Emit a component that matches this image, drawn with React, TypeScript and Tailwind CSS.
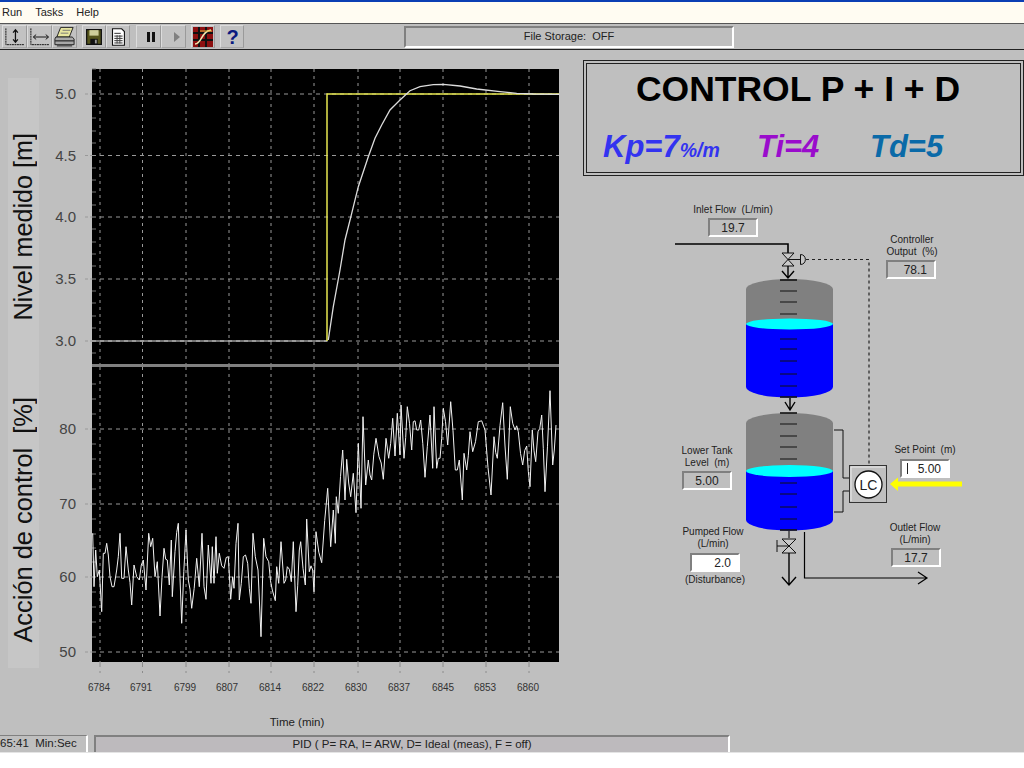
import React from 'react';

// control signal traced from the trend, as x,y in page pixels
const RAW_A = [38,490,42,650,47,540,52,620,58,600,65,725,70,550,80,520,90,620,102,650,110,600,120,490,125,625,132,625,138,530,145,600,155,705,162,585,170,620,178,630,190,570,198,660,206,490,212,530,218,505,225,620,232,575,240,738,252,535,262,570,268,645,274,510,277,680,285,545,295,460,305,760,318,480,325,630,335,715,350,565,358,650,366,490,372,650,378,688,385,525,393,640,397,530,402,640,408,500,412,610,418,550,432,595,445,560,452,688,458,620,462,655,468,520,474,460,478,690,490,560,503,580,513,700,519,490,526,560,534,600,543,800,551,505,558,560,566,575,577,660,586,692,590,590,596,640,603,515,612,640,622,590,634,635,640,515,648,725,658,540,662,515,676,645,680,447,688,605,698,600,702,665,708,485,725,578,743,355,752,530,760,420,766,520,769,380,775,430];
const RAW_B = [128,240,135,390,140,268,152,380,160,310,168,428,175,220,183,415,189,140,197,345,205,270,215,330,228,205,237,260,250,328,258,205,266,265,278,145,285,258,292,130,300,255,303,105,312,265,322,110,335,240,340,155,350,180,362,150,375,322,382,230,390,135,398,295,402,110,410,295,420,265,430,115,443,225,452,95,466,300,478,270,487,390,492,250,500,300,510,185,518,245,535,155,555,180,573,375,582,200,592,265,608,98,622,328,631,110,645,180,655,185,668,285,680,228,690,350,697,180,707,275,714,185,725,135,735,365,750,62,758,285,768,165];

function controlPoints() {
  const pts: number[][] = [];
  for (let i = 0; i < RAW_A.length; i += 2) pts.push([80 + RAW_A[i] / 3, 370 + RAW_A[i + 1] / 3]);
  for (let i = 0; i < RAW_B.length; i += 2) pts.push([300 + RAW_B[i] / 3, 370 + RAW_B[i + 1] / 3]);
  const out: string[] = [];
  pts.forEach((p, i) => {
    out.push(`${p[0].toFixed(1)},${p[1].toFixed(1)}`);
    const n = pts[i + 1];
    if (n && n[0] - p[0] > 3) {
      const off = i % 2 === 0 ? 5 : -5;
      out.push(`${((p[0] + n[0]) / 2).toFixed(1)},${((p[1] + n[1]) / 2 + off).toFixed(1)}`);
    }
  });
  return out.join(' ');
}

const CURVE = [[85,810],[100,710],[120,600],[135,510],[155,430],[175,350],[205,260],[225,205],[245,165],[270,120],[300,90],[330,62],[360,50],[400,44],[430,43],[480,48],[530,57],[600,65],[650,70],[700,72],[778,73]]
  .map(([x, y]) => `${(300 + x / 3).toFixed(1)},${(70 + y / 3).toFixed(1)}`)
  .join(' ');

const V_GRID = [100, 142.5, 186, 229, 271, 314, 358, 400, 443, 486, 529];
const TIMES = [[99,'6784'],[141,'6791'],[185,'6799'],[227,'6807'],[270,'6814'],[313,'6822'],[356,'6830'],[399,'6837'],[443,'6845'],[485,'6853'],[528,'6860']] as const;
const UPPER = [[94,'5.0'],[155.5,'4.5'],[217,'4.0'],[279,'3.5'],[341,'3.0']] as const;
const LOWER = [[429,'80'],[504,'70'],[577,'60'],[652,'50']] as const;

const Trends = () => (
  <svg viewBox="40 50 530 685" className="w-[530px] h-[685px] shrink-0" fontFamily="'Liberation Sans', Arial, sans-serif">
    <rect x="92" y="69" width="467" height="295" fill="#000" />
    <rect x="92" y="367" width="467" height="295" fill="#000" />
    <rect x="92" y="364" width="467" height="3" fill="#808080" />
    {/* minor ticks */}
    {[69,81,106,118,131,143,168,180,192,205,229,242,254,266,291,303,316,328,353].map(y => (
      <line key={y} x1="92" x2="96" y1={y} y2={y} stroke="#777" />
    ))}
    {[384,399,414,444,459,474,489,519,534,548,562,592,607,622,637].map(y => (
      <line key={y} x1="92" x2="96" y1={y} y2={y} stroke="#777" />
    ))}
    {/* grid */}
    {V_GRID.map(x => (
      <g key={x}>
        <line x1={x} x2={x} y1="69" y2="364" stroke="#999" strokeDasharray="3 4" />
        <line x1={x} x2={x} y1="367" y2="662" stroke="#999" strokeDasharray="3 4" />
        <line x1={x} x2={x} y1="662" y2="673" stroke="#8c8c8c" strokeDasharray="5 4" />
      </g>
    ))}
    {[...UPPER, ...LOWER].map(([y]) => (
      <g key={y}>
        <line x1="92" x2="559" y1={y} y2={y} stroke="#999" strokeDasharray="4 4" />
        <line x1="85" x2="92" y1={y} y2={y} stroke="#999" strokeDasharray="3 2" />
      </g>
    ))}
    {/* axis numbers */}
    {UPPER.map(([y, t]) => (
      <text key={t} x="76" y={y + 5} textAnchor="end" fontSize="15" fill="#444">{t}</text>
    ))}
    {LOWER.map(([y, t]) => (
      <text key={t} x="76" y={y + 5} textAnchor="end" fontSize="15" fill="#444">{t}</text>
    ))}
    {TIMES.map(([x, t]) => (
      <text key={t} x={x} y="691" textAnchor="middle" fontSize="10" fill="#333">{t}</text>
    ))}
    <text x="297" y="726" textAnchor="middle" fontSize="11.5" fill="#222">Time (min)</text>
    {/* level */}
    <polyline points="92,341 327,341" fill="none" stroke="#e8e8e8" strokeWidth="1.2" />
    <polyline points="327,341 327,94 559,94" fill="none" stroke="#e8e850" strokeWidth="1.5" />
    <polyline points={CURVE} fill="none" stroke="#dcdcdc" strokeWidth="1.3" />
    {/* control action */}
    <polyline points={controlPoints()} fill="none" stroke="#f2f2f2" strokeWidth="1" />
  </svg>
);

const Ticks = ({ ys }: { ys: number[] }) => (
  <>
    {ys.map((y, i) => (
      <line key={y} x1="780" x2="797" y1={y} y2={y} stroke="#111" strokeWidth={i === 0 || i === ys.length - 1 ? 1.6 : 1} />
    ))}
  </>
);

const Tank = ({ top, side, water, waterRy, sideEnd }: { top: number; side: number; water: number; waterRy: number; sideEnd: number }) => (
  <>
    <ellipse cx="789.5" cy={side} rx="43.5" ry={side - top} fill="#808080" />
    <rect x="746" y={side} width="87" height={water - side} fill="#808080" />
    <ellipse cx="789.5" cy={sideEnd} rx="43.5" ry="10.5" fill="#0000ff" />
    <rect x="746" y={water} width="87" height={sideEnd - water} fill="#0000ff" />
    <ellipse cx="789.5" cy={water} rx="43.5" ry={waterRy} fill="#00ffff" />
  </>
);

const Schematic = () => (
  <svg viewBox="570 176 454 558" className="w-[454px] h-[558px] block" fontFamily="'Liberation Sans', Arial, sans-serif">
    <Tank top={279} side={289} water={324} waterRy={5.5} sideEnd={387} />
    <Ticks ys={[280, 291, 302, 314, 339, 349, 361, 374, 386, 397]} />
    <Tank top={413} side={423} water={471} waterRy={6} sideEnd={520} />
    <Ticks ys={[413, 424, 436, 447, 459, 483, 494, 507, 519, 530]} />

    {/* inlet line and valve */}
    <path d="M675 244H788V253" fill="none" stroke="#000" strokeWidth="1.6" />
    <path d="M782 253H794L782 266H794Z" fill="#c8c8c8" stroke="#111" />
    <path d="M788 259.5H800" stroke="#111" />
    <path d="M800.5 254.5C807 254.5 807 264.5 800.5 264.5Z" fill="#c8c8c8" stroke="#111" />
    <path d="M806 259.5H869V465" fill="none" stroke="#222" strokeWidth="1.2" strokeDasharray="3 3" />
    <path d="M788 266V278M782 271L788 278L794 271" fill="none" stroke="#000" strokeWidth="1.4" />
    <path d="M790 398V410M785 402L790 410L795 402" fill="none" stroke="#000" strokeWidth="1.4" />

    {/* level transmitter */}
    <path d="M834 430H843V478H849M834 512H843V491H849" fill="none" stroke="#111" />
    <rect x="849.5" y="465.5" width="37" height="37" fill="#c0c0c0" stroke="#333" />
    <path d="M851 501V467H885" fill="none" stroke="#ececec" />
    <circle cx="868.5" cy="484.5" r="13.5" fill="#fff" stroke="#111" strokeWidth="1.3" />
    <text x="868.5" y="489.5" textAnchor="middle" fontSize="14" fill="#222">LC</text>
    <path d="M890 484L898 477.5V481.5H962V486.5H898V491Z" fill="#ffff00" />

    {/* drain and outlet */}
    <path d="M789 531V538" stroke="#000" />
    <path d="M782 539H796L782 553H796Z" fill="#c8c8c8" stroke="#111" />
    <path d="M777 540V552M777 546H789" fill="none" stroke="#111" />
    <path d="M789 553V584M782 577L789 585L796 577" fill="none" stroke="#000" strokeWidth="1.4" />
    <path d="M804.5 532V578H926M918 572L927 578L918 584" fill="none" stroke="#000" strokeWidth="1.2" />
  </svg>
);

const IconAxisV = () => (
  <svg viewBox="0 0 24 22" className="w-6 h-[22px]" fill="none" stroke="#111">
    <path d="M3 2V19H22" strokeDasharray="2 0.6" />
    <path d="M13 4V16M10.5 6.5L13 3.5L15.5 6.5M10.5 13.5L13 16.5L15.5 13.5" strokeWidth="1.3" />
  </svg>
);

const IconAxisH = () => (
  <svg viewBox="0 0 24 22" className="w-6 h-[22px]" fill="none" stroke="#111">
    <path d="M3 2V19H22" strokeDasharray="2 0.6" />
    <path d="M6 11H21M8.5 8.5L5.5 11L8.5 13.5M18.5 8.5L21.5 11L18.5 13.5" />
  </svg>
);

const IconPrinter = () => (
  <svg viewBox="0 0 24 22" className="w-6 h-[22px]">
    <path d="M8 1H21L17 11H4Z" fill="#e8e6a0" stroke="#222" />
    <path d="M10 4H18M8 7H16" stroke="#777" />
    <path d="M3 11H20L22 13V19H2V13Z" fill="#a8a8a8" stroke="#222" />
    <path d="M2 15H22" stroke="#333" strokeWidth="1.4" />
    <rect x="4" y="19" width="16" height="2" fill="#555" />
  </svg>
);

const IconSave = () => (
  <svg viewBox="0 0 24 22" className="w-6 h-[22px]">
    <path d="M4 3H20V19H4Z" fill="#55551c" stroke="#111" strokeWidth="1.4" />
    <rect x="7" y="3.5" width="10" height="6" fill="#cfcf9a" />
    <rect x="8" y="13" width="8" height="6" fill="#111" />
    <rect x="13" y="14" width="2" height="4" fill="#999" />
  </svg>
);

const IconDoc = () => (
  <svg viewBox="0 0 24 22" className="w-6 h-[22px]" fill="none">
    <path d="M6 2H16L19 5V20H6Z" fill="#fff" stroke="#111" strokeWidth="1.2" />
    <path d="M8 7H15M8 10H17M8 12.5H17M8 15H17M8 17.5H17" stroke="#222" />
    <path d="M11 9V18M14 9V18" stroke="#444" />
  </svg>
);

const IconTrend = () => (
  <svg viewBox="0 0 22 22" className="w-[22px] h-[22px]">
    <rect x="1" y="1" width="20" height="20" fill="#8c1010" />
    <path d="M1 7H21M1 14H21M7 1V21M14 1V21" stroke="#111" strokeWidth="2" />
    <path d="M3 18C10 18 9 5 19 4" fill="none" stroke="#f0e8b0" strokeWidth="1.5" />
    <path d="M8 5H20" stroke="#e8c040" />
  </svg>
);

const ToolBtn = ({ className, children }: { className: string; children?: React.ReactNode }) => (
  <div className={`h-[23px] flex items-center justify-center bg-[#c2c2c2] border-t border-l border-t-[#dcdcdc] border-l-[#dcdcdc] border-r border-b border-r-[#9a9a9a] border-b-[#a8a8a8] ${className}`}>
    {children}
  </div>
);

const Sunken = ({ className, children }: { className: string; children: React.ReactNode }) => (
  <div className={`absolute w-[50px] h-[19px] flex items-center text-[12px] text-[#222] border-2 border-t-[#808080] border-l-[#808080] border-r-white border-b-white ${className}`}>
    {children}
  </div>
);

const Caption = ({ className, children }: { className: string; children: React.ReactNode }) => (
  <div className={`absolute -translate-x-1/2 w-max text-center whitespace-pre text-[10px] leading-[11.5px] text-[#222] ${className}`}>
    {children}
  </div>
);

const App: React.FC = () => {
  return (
    <div className="w-[1024px] h-[768px] flex flex-col bg-white overflow-hidden font-['Liberation_Sans',Arial,sans-serif] text-[#111]">
      <div className="h-[2px] bg-[#0b3fb4]" />

      {/* Menu */}
      <div className="h-[21px] bg-[#fffcf2] flex items-center gap-[13px] pl-[2px] text-[11px] text-[#222]">
        <span>Run</span>
        <span>Tasks</span>
        <span>Help</span>
      </div>

      {/* Toolbar */}
      <div className="h-[27px] bg-[#bfbfbf] border-t border-t-[#555] border-b border-b-[#222] flex items-center pl-[2px]">
        <ToolBtn className="w-[25px]"><IconAxisV /></ToolBtn>
        <ToolBtn className="w-[25px]"><IconAxisH /></ToolBtn>
        <ToolBtn className="w-[25px]"><IconPrinter /></ToolBtn>
        <ToolBtn className="w-[24px] ml-[5px]"><IconSave /></ToolBtn>
        <ToolBtn className="w-[24px]"><IconDoc /></ToolBtn>
        <ToolBtn className="w-[25px] ml-[6px] pl-[5px]">
          <div className="flex gap-[2px]">
            <div className="w-[3px] h-[10px] bg-[#111]" />
            <div className="w-[3px] h-[10px] bg-[#111]" />
          </div>
        </ToolBtn>
        <ToolBtn className="w-[25px] pl-[6px]">
          <div className="w-0 h-0 border-y-[5px] border-y-transparent border-l-[6px] border-l-[#808080]" />
        </ToolBtn>
        <ToolBtn className="w-[24px] ml-[5px]"><IconTrend /></ToolBtn>
        <ToolBtn className="w-[24px] ml-[5px] pl-[1px]">
          <span className="text-[20px] font-bold text-[#0a1a80] leading-none">?</span>
        </ToolBtn>
        <div className="ml-[160px] w-[330px] h-[22px] flex items-center justify-center text-[11px] text-[#222] border-2 border-t-[#808080] border-l-[#808080] border-r-white border-b-white">
          <span className="whitespace-pre">File Storage:  OFF</span>
        </div>
      </div>

      {/* Main */}
      <div className="h-[685px] bg-[#bfbfbf] flex">
        <div className="w-[40px] shrink-0 pl-[8px] pt-[28px]">
          <div className="w-[31px] h-[590px] bg-[#c6c6c6] flex flex-col">
            <div className="h-[267px] flex items-end justify-center pb-[24px]">
              <span className="[writing-mode:vertical-rl] rotate-180 text-[25.2px] leading-[31px] whitespace-pre text-[#111]">Nivel medido [m]</span>
            </div>
            <div className="h-[323px] flex items-end justify-center pb-[25px]">
              <span className="[writing-mode:vertical-rl] rotate-180 text-[25.4px] leading-[31px] whitespace-pre text-[#111]">Acción de control  [%]</span>
            </div>
          </div>
        </div>

        <Trends />

        <div className="w-[454px] shrink-0 pt-[10px] flex flex-col">
          <div className="ml-[13px] h-[116px] border-[4px] border-double border-[#222] flex flex-col">
            <div className="pt-[5px] pr-[11px] text-center text-[35.5px] leading-[40px] font-bold text-black">CONTROL P + I + D</div>
            <div className="mt-[20px] pl-[16px] flex items-baseline italic font-bold text-[31px] leading-[36px]">
              <div className="w-[154px] text-[#3333f0]">Kp=7<span className="text-[19.5px]">%/m</span></div>
              <div className="w-[113px] text-[#9a0ccc]">Ti=4</div>
              <div className="text-[#0a6aa8]">Td=5</div>
            </div>
          </div>

          <div className="relative flex-1">
            <Schematic />
            <Caption className="left-[163px] top-[28px]">Inlet Flow  (L/min)</Caption>
            <Sunken className="left-[138px] top-[42px] justify-center">19.7</Sunken>
            <Caption className="left-[342px] top-[58px]">{'Controller\nOutput  (%)'}</Caption>
            <Sunken className="left-[316px] top-[84px] justify-end pr-[7px]">78.1</Sunken>
            <Caption className="left-[355px] top-[268px]">Set Point  (m)</Caption>
            <Sunken className="left-[330px] top-[283px] bg-white justify-end pr-[7px]">
              <div className="absolute left-[5px] top-[2px] w-px h-[11px] bg-[#222]" />
              5.00
            </Sunken>
            <Caption className="left-[137px] top-[269px]">{'Lower Tank\nLevel  (m)'}</Caption>
            <Sunken className="left-[112px] top-[295px] justify-center">5.00</Sunken>
            <Caption className="left-[143px] top-[350px]">{'Pumped Flow\n(L/min)'}</Caption>
            <Sunken className="left-[120px] top-[377px] bg-white justify-end pr-[7px]">2.0</Sunken>
            <Caption className="left-[145px] top-[398px]">(Disturbance)</Caption>
            <Caption className="left-[345px] top-[346px]">{'Outlet Flow\n(L/min)'}</Caption>
            <Sunken className="left-[321px] top-[372px] justify-center">17.7</Sunken>
          </div>
        </div>
      </div>

      {/* Status bar */}
      <div className="h-[18px] bg-[#bfbfbf] flex border-b border-b-[#e4e4e4]">
        <div className="w-[88px] border-t border-t-[#808080] border-r-2 border-r-white flex items-center text-[11.5px] text-[#222] whitespace-pre">65:41  Min:Sec</div>
        <div className="ml-[6px] w-[636px] bg-[#bdbabd] border-t-2 border-l-2 border-t-[#808080] border-l-[#808080] border-r-2 border-r-white flex items-center justify-center text-[11.5px] text-[#222]">
          PID ( P= RA, I= ARW, D= Ideal (meas), F = off)
        </div>
      </div>
    </div>
  );
};

export default App;
